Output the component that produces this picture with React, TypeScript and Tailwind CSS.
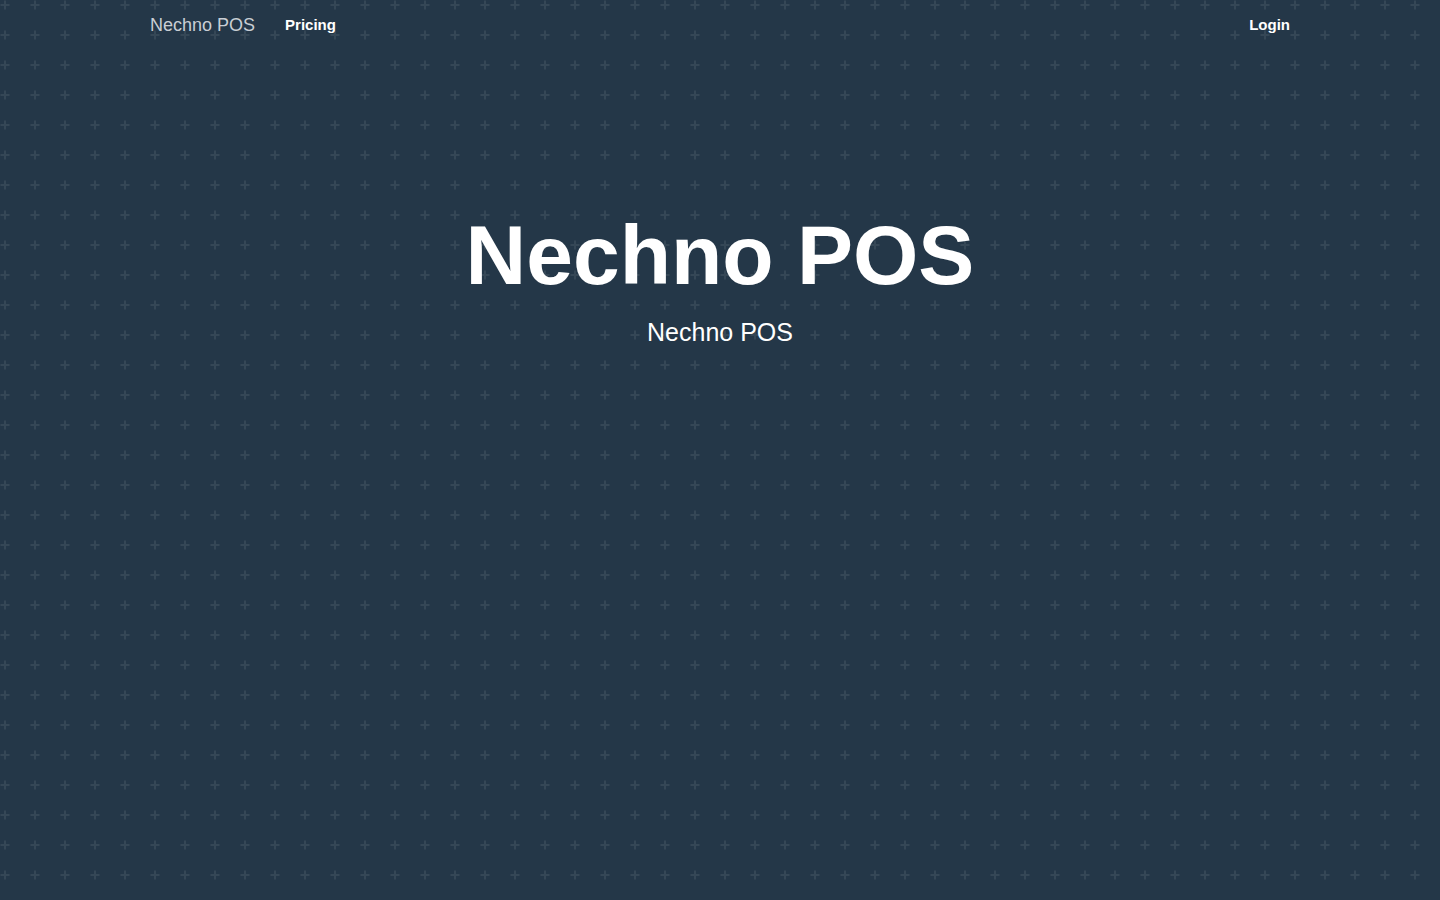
export default function App() {
  return (
    <div className="relative min-h-[900px] w-full overflow-hidden bg-[#243748] font-['Liberation_Sans',Arial,sans-serif] text-white">
      <svg className="absolute inset-0 h-full w-full" aria-hidden="true">
        <defs>
          <pattern id="plus" x="-10" y="-10" width="30" height="30" patternUnits="userSpaceOnUse">
            <rect x="10.5" y="14" width="9" height="2" fill="rgba(255,255,255,0.08)" />
            <rect x="14" y="10.5" width="2" height="3.5" fill="rgba(255,255,255,0.08)" />
            <rect x="14" y="16" width="2" height="3.5" fill="rgba(255,255,255,0.08)" />
          </pattern>
        </defs>
        <rect width="100%" height="100%" fill="url(#plus)" />
      </svg>

      <div className="relative">
        <nav className="mx-auto flex h-[50px] w-[1140px] items-center justify-between">
          <div className="flex items-center gap-[30px]">
            <a href="#" className="text-[18px] text-[#c9ced4]">
              Nechno POS
            </a>
            <a href="#" className="text-[15px] font-bold text-white">
              Pricing
            </a>
          </div>
          <a href="#" className="text-[15px] font-bold text-white">
            Login
          </a>
        </nav>

        <section className="flex flex-col items-center pt-[155px] text-center">
          <h1 className="text-[84px] font-bold leading-[1.2]">Nechno POS</h1>
          <p className="mt-2 text-[25px] leading-[1.5]">Nechno POS</p>
        </section>
      </div>
    </div>
  )
}
